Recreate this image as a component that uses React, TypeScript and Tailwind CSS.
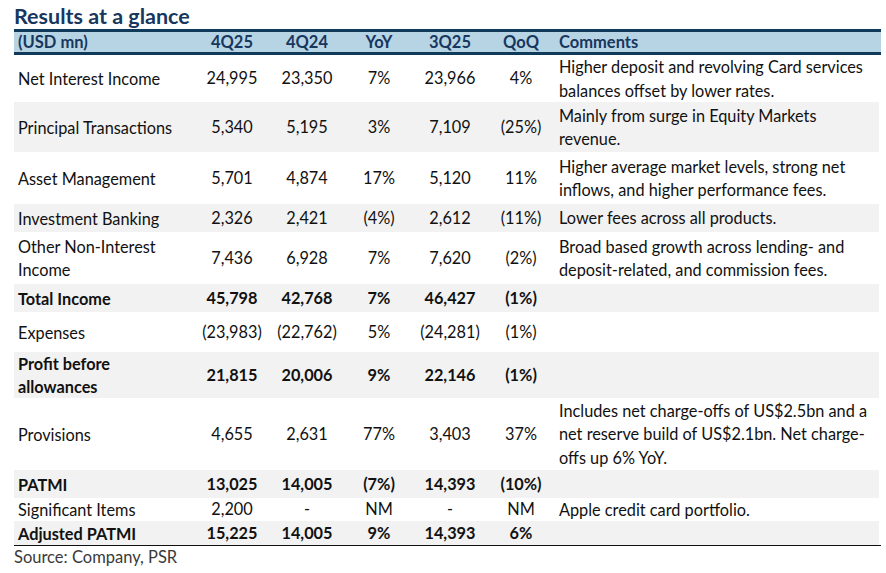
const font = { fontFamily: "Lato, 'Open Sans', 'Liberation Sans', sans-serif" };

type Row = {
  label: string[];
  v: string[];
  comment?: string[];
  bold?: boolean;
  h: string;
  gray?: boolean;
};

const rows: Row[] = [
  { label: ["Net Interest Income"], v: ["24,995", "23,350", "7%", "23,966", "4%"], comment: ["Higher deposit and revolving Card services", "balances offset by lower rates."], h: "h-[47px]" },
  { label: ["Principal Transactions"], v: ["5,340", "5,195", "3%", "7,109", "(25%)"], comment: ["Mainly from surge in Equity Markets", "revenue."], h: "h-[50px]", gray: true },
  { label: ["Asset Management"], v: ["5,701", "4,874", "17%", "5,120", "11%"], comment: ["Higher average market levels, strong net", "inflows, and higher performance fees."], h: "h-[52px]" },
  { label: ["Investment Banking"], v: ["2,326", "2,421", "(4%)", "2,612", "(11%)"], comment: ["Lower fees across all products."], h: "h-[28px]", gray: true },
  { label: ["Other Non-Interest", "Income"], v: ["7,436", "6,928", "7%", "7,620", "(2%)"], comment: ["Broad based growth across lending- and", "deposit-related, and commission fees."], h: "h-[52px]" },
  { label: ["Total Income"], v: ["45,798", "42,768", "7%", "46,427", "(1%)"], bold: true, h: "h-[28px]", gray: true },
  { label: ["Expenses"], v: ["(23,983)", "(22,762)", "5%", "(24,281)", "(1%)"], h: "h-[40px]" },
  { label: ["Profit before", "allowances"], v: ["21,815", "20,006", "9%", "22,146", "(1%)"], bold: true, h: "h-[46px]", gray: true },
  { label: ["Provisions"], v: ["4,655", "2,631", "77%", "3,403", "37%"], comment: ["Includes net charge-offs of US$2.5bn and a", "net reserve build of US$2.1bn. Net charge-", "offs up 6% YoY."], h: "h-[72px]" },
  { label: ["PATMI"], v: ["13,025", "14,005", "(7%)", "14,393", "(10%)"], bold: true, h: "h-[28px]", gray: true },
  { label: ["Significant Items"], v: ["2,200", "-", "NM", "-", "NM"], comment: ["Apple credit card portfolio."], h: "h-[23px]" },
  { label: ["Adjusted PATMI"], v: ["15,225", "14,005", "9%", "14,393", "6%"], bold: true, h: "h-[24px]", gray: true },
];

const colW = ["w-[76px]", "w-[74px]", "w-[70px]", "w-[72px]", "w-[70px]"];

export default function App() {
  return (
    <div className="h-[573px] w-[886px] bg-white pl-[14px] pr-[5px] pt-[3px]" style={font}>
      <div className="h-[26px] text-[21.5px] font-bold leading-[26px] text-[#17375e]">Results at a glance</div>
      <div className="flex h-[26px] items-center border-y-[3px] border-[#0f3a5a] bg-[#b7d4e5] text-[16.5px] font-bold text-[#17375e]">
        <div className="w-[180px] pl-[4px]">(USD mn)</div>
        {["4Q25", "4Q24", "YoY", "3Q25", "QoQ"].map((h, i) => (
          <div key={h} className={`${colW[i]} text-center`}>{h}</div>
        ))}
        <div className="flex-1 pl-[3px]">Comments</div>
      </div>
      <div className="pr-[2px] text-[16.3px] text-[#111]">
        {rows.map((r, idx) => (
          <div
            key={idx}
            className={`flex items-center ${r.h} ${r.gray ? "bg-[#f2f2f2]" : "bg-white"} ${r.bold ? "font-bold" : ""}`}
          >
            <div className="w-[180px] whitespace-nowrap pl-[4px] leading-[23px]">
              {r.label.map((l) => (
                <div key={l}>{l}</div>
              ))}
            </div>
            {r.v.map((v, i) => (
              <div key={i} className={`${colW[i]} whitespace-nowrap text-center`}>{v}</div>
            ))}
            <div className="flex-1 whitespace-nowrap pl-[3px] leading-[23.5px] font-normal">
              {r.comment?.map((c) => (
                <div key={c}>{c}</div>
              ))}
            </div>
          </div>
        ))}
      </div>
      <div className="border-t-[1.5px] border-[#111] pt-[1px] text-[16.5px] leading-[20px] text-[#3a3a3a]">Source: Company, PSR</div>
    </div>
  );
}
